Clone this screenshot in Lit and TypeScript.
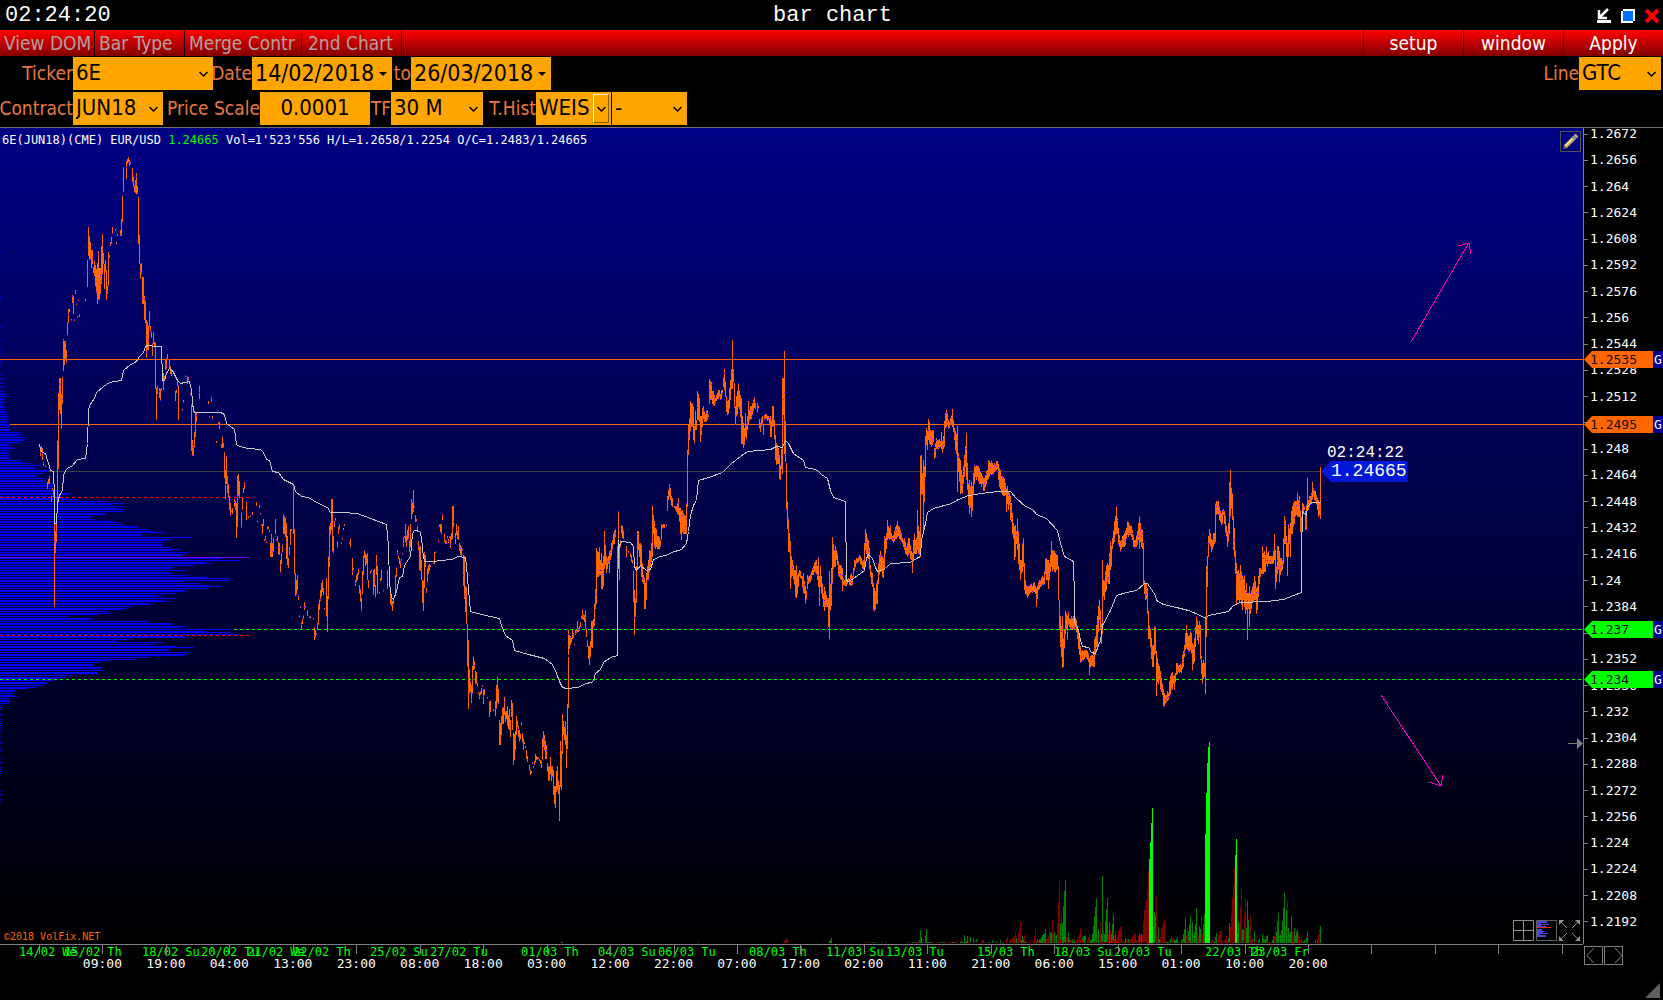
import { LitElement, html, svg, css } from "lit";
import { customElement, property } from "lit/decorators.js";

const PLOT_W = 1583;
const PLOT_H = 816;
const TOP = 128;

interface Tile {
  ox: number;
  oy: number;
  bars: string;
}

/* Bars are stored per tile as x:high-low, three units to one chart unit. */
const TILES: Tile[] = [
  {
    ox: 0,
    oy: 130,
    bars: `121:952-976 124:948-960 127:955-990 130:998-1006 136:1008 142:1056-1077 145:1048-1062 148:1038-1060 154:1100-1115 157:1074-1080 160:1080-1100
163:1100-1430 166:1205-1268 169:1180-1235 172:935-1130 175:790-1015 178:746-838 181:746-850 184:792-895 187:743-820 190:627-722 193:633-705 196:634-690 199:660-698
202:576-614 205:537-578 208:538-545 214:570 217:495-518 220:500-551 223:570 226:481-490 229:521 232:560 235:510 238:553-560 256:510
262:392-470 265:293-378 268:318-388 271:338-385 274:362-412 277:362-400 280:413-428 283:392-437 286:407-468 289:417-487 292:400-521 295:365-506 298:414-508 301:416-491 304:350-460 307:312-432 310:370-402 313:402-476 316:392-424 319:420-510 322:470-492 325:366-466 328:375-384
331:338-347 334:322-340 337:293-310 346:297-303 349:338 352:315 361:300-317 364:268-317 367:195-275 370:112-185 379:93-147 382:88-100 385:82-95 388:92-108 391:97-102 397:114-155 400:138-170 403:168-185 406:150-188 409:129-190 412:168-190
415:201-342 418:315-400 421:402-445 424:400-430 427:443-522 430:443-520 433:498-568 436:515-578 439:570-684 442:578-660 445:588-660 448:543-590 451:590-605 454:603-622 457:640-678 460:608-640 463:636-650 466:640-776 469:776-868 472:768-790 478:775-802 481:778-812 484:776-782 487:752 490:730-778 493:738-752 496:687-718 499:685-716 502:672-690 508:688-716 511:708-730 514:720-736
526:784-812 529:782-788 532:748-768 535:765-868 547:840 550:810-818 556:737 562:738-760 565:743-748 571:792 574:822-962 577:930-978 580:950-976 583:908-952 586:846-920 589:848-875 598:768-806 625:815-822 634:801-815 628:860 637:860 649:936 655:880 658:876-897 664:943-953 667:922-953 670:940-953
673:968-1044 676:1020-1106 679:978-1062 682:1038-1088 685:1062-1104 688:1100-1140 691:1120-1158 694:1140-1145 697:1135-1152 703:1108-1130 706:1115-1140 709:1120-1223 712:1040-1190 715:1032-1098 718:1055-1106 724:1150-1190 727:1103-1140 730:1075-1088 733:1058-1076 739:1113-1168 745:1160 751:1158 757:1147-1153 769:1116-1128 772:1175 778:1126-1134 781:1152 784:1186 787:1182-1212 790:1168-1188 793:1230 796:1220-1230 799:1236 802:1190-1200 805:1195 808:1202
811:1240-1280 814:1214-1280 817:1240-1280 820:1225-1266 826:1168-1210 829:1230 832:1220-1236 835:1238-1270 838:1240-1275 841:1290-1328 844:1270-1300 847:1245-1268 850:1152-1212 853:1160-1210 856:1165-1220 859:1180-1285 862:1220-1305 865:1285-1314 868:1253-1275 871:1198-1245 874:1200 880:1070-1212 883:1198-1330 886:1330-1397 889:1350-1395 892:1335-1380 895:1395-1408 898:1457 901:1430 904:1476-1498 907:1467-1480 910:1455-1465 913:1418-1440 916:1430 922:1442-1458 928:1460 931:1461 940:1467
943:1492-1530 946:1502-1520 949:1512 952:1480-1498 955:1422-1484 958:1408-1440 961:1380-1412 964:1360-1400 967:1352-1385 970:1374-1395 973:1438 979:1345-1460 982:1398-1505 985:1280-1405 988:1190-1310 991:1180-1215 994:1107-1200 997:1107-1265 1000:1220-1268 1003:1175-1190 1006:1166 1012:1235-1250 1015:1192-1210 1018:1182-1195 1024:1240 1027:1228 1030:1196 1033:1186 1048:1238 1051:1228-1250 1057:1285-1335 1060:1318 1066:1350-1367 1069:1335-1355 1072:1330-1350 1075:1315-1335 1078:1366-1390 1081:1378-1415 1084:1405-1442 1087:1325-1390 1090:1275-1335 1093:1260-1282 1096:1270-1308 1099:1275-1300 1102:1270-1350 1105:1350-1372
1111:1326 1114:1322 1120:1320-1395 1123:1318-1370 1126:1365-1403 1129:1275-1335 1132:1310-1390 1138:1390 1141:1345-1352 1144:1318-1350 1150:1383 1162:1322-1375 1171:1382-1420 1174:1400-1428 1177:1415-1442 1180:1405-1420 1186:1335-1388 1189:1312-1340 1192:1260-1272 1195:1276-1285 1198:1285-1300 1201:1295-1312 1204:1290 1207:1272 1210:1222-1250 1213:1220 1216:1182-1235 1219:1215-1250 1222:1200-1230 1225:1190-1225 1228:1230-1265 1231:1182-1250 1234:1107-1165 1237:1116-1150 1240:1080-1145 1243:1130 1246:1155-1175 1249:1170 1252:1190-1205 1255:1235-1260 1258:1250-1320`,
  },
  {
    ox: 400,
    oy: 400,
    bars: `61:440-512 64:482-540 67:540-608 70:540-633 73:458-562 76:465-500 79:565-578 82:505-545 85:495-520 88:492-512 91:497 100:488 103:458-490 106:455 115:422 118:372-380 121:373-395 124:372-400 127:342-360 133:400-425 136:420-430 139:425 142:412 145:418-428 148:410 151:408-442 154:400-418 157:320-415 160:318-380 166:400-430 169:372-405 172:395-415 175:380-418 178:430-452 181:435-465 184:440-470 187:450
190:465-558 193:470-595 196:560-635 199:563-672 202:672-800 205:720-927 208:808-880 211:845-875 214:855-908 217:800-880 220:770-808 223:785-805 226:815-850 229:818-850 232:850-860 235:880 238:880-895 241:875-885 244:865-880 247:858 250:868-910 253:868-885 262:893 268:905-950 271:900-935 280:930 286:905-948 289:856-925 292:830-905 295:868-910 298:962-1033 301:970-1035 304:950-1005 307:925-970 310:922-972 313:892-945 316:933-965 319:935-955 322:918-978 325:945-985 328:928-990 331:960-1010 334:902-950 337:910-990 340:1000-1095 343:1003-1080 346:995-1050 349:950-1005 352:962-980 355:980-1010 358:990-1025 361:1002-1015 364:966-975 367:1000-1025 370:1015-1050 373:1030 376:1040 379:1050-1075 382:1070-1085 388:1095-1110 391:1112-1125 394:1115 397:1088 400:1100 403:1085-1095 406:1062-1085 409:1068-1080 412:1072-1078 415:1075 418:1080 421:1080-1090 424:1085-1103 427:1015-1080 430:993-1040 433:1005-1050 436:1025-1075 439:1035-1075 442:1090-1115 445:1100-1142 448:1100-1140 451:1073-1125 454:1100-1142 457:1100-1130 460:1110-1185 463:1158-1212 466:1160-1223 469:1115-1175 472:1100-1170 475:1140-1180 478:1155-1262 481:1025-1160 484:1055-1170 487:942-1060 490:963-1005 493:980-1020 496:963-1035 499:1005-1102 502:912-1045 505:773-922 505:690-765 508:705-745 511:710-735 514:715-725 517:690-715 520:700-712 523:735 526:690-705 529:690-697 532:665-695 535:685-695 538:680-692 541:668-680 544:650-655 547:627-655 550:645-660 553:645-665 556:632-685 559:685-710 562:720-740 565:740-775 568:738-795 571:725-770 574:665-740 577:665-742 580:658-682 583:613-678 586:568-625 589:445-610 592:455-530 595:458-530 598:442-528 601:480-525 604:460-565 607:490-567 610:470-560 613:395-505 616:435-495 619:470-518 622:475-505 625:470-490 628:455-518 631:450-480 634:430-470 637:420-450 640:400-435 643:395-430 646:388-410 652:440-510 655:333-440 658:440-540 661:420-440 664:375-400 667:380-412 670:390-415 679:440-472 685:455 691:460-470 694:465-485 697:480-488
700:512-605 703:570-705 706:595-650 709:500-608 712:395-510 715:395-450 718:430-470 721:430-500 724:435-530 727:490-545 730:525-550 733:535-627 736:548-627 739:520-600 742:500-540 745:480-540 748:450-515 751:455-500 754:430-485 757:318-470 760:345-400 763:365-440 766:385-445 769:388-440 772:410-450 775:410-445 778:412-448 781:420-440 784:372-420 787:375-385 790:374-382 793:374-382 799:374 802:290-332 805:270-300 808:252-290 811:265-300 814:290-318 817:295-320 823:320 826:318-330 829:318-335 832:310-340 835:295-345 838:325-365 841:325-400 844:335-420 847:330-395 850:340-400 853:345-400 856:350-402 859:310-400 862:150-320 865:75-165`,
  },
  {
    ox: 640,
    oy: 320,
    bars: `148:295-360 151:243-335 154:250-320 157:250-320 160:260-360 163:320-368 166:270-330 169:300-330 172:213-300 175:222-300 178:235-305 181:290-365 184:290-345 187:265-320 190:258-295 193:275-305 196:282-305 199:275-305 202:272-300 205:285-290 208:178-250 211:185-240 214:187-240 217:215-250 220:215-258 223:225-258 226:235-248 229:225-242 232:218-235 235:210-235 238:210-230 241:222-240 244:212-235 247:210-222 250:172-200 253:147-210 256:183-230 259:230-275 262:245-285 265:240-282 268:205-265 271:180-240 274:147-205 277:60-205 280:147-185 283:190-262 286:260-313 289:228-290 292:213-285 295:190-260 298:210-265 301:225-290 304:235-370 307:290-372 310:310-383 313:325-375 316:280-350 319:315-355 322:290-330 325:245-312 328:270-302 331:260-295 334:258-295 337:250-285 340:240-272 343:233-262 346:250-265 352:250-275 355:258-265 358:298-325 361:310-335 364:295-320 367:290-310 370:315-345 373:285-300 376:283-295 379:282-297 382:288-302 385:290-300 388:295-310 391:290-350 394:300-350 397:260-320 400:258-320 403:300-355 406:345-420 409:370-435 412:375-430 415:385-430 418:405-475 421:435-478 424:388-445 427:175-460 430:175-285 433:93-400 436:303-425 439:430-568 442:545-625 445:595-695 448:640-698 451:665-805 454:710-770 457:720-768 460:735-780 463:750-795 466:750-830 469:735-833 472:765-825 475:760-800 478:750-770 481:755-772 484:768-775 487:768-800 490:760-818 493:785-820 496:800-850 499:815-838 502:765-805 505:770-790 508:768-785 511:762-785 514:755-778 517:745-765 520:738-765 523:730-755 526:723-758 529:722-760 532:738-780 535:713-800 538:770-858 541:740-800 544:770-820 547:790-835 550:820-860 553:803-872 556:815-860 559:825-860 562:835-860 565:835-920 568:753-957 571:790-870 574:745-858 577:653-790 580:672-745 583:690-740 586:675-740 589:690-720 592:700-735 595:725-768 598:735-770 601:735-775 604:738-780 607:745-812 610:775-795 613:780-797 616:765-797 619:780-797 622:778-790 625:775-785 628:778-795 631:765-798 634:760-797 637:768-795 640:745-770 643:722-752 646:720-740 649:715-730 652:715-728 655:712-725 658:705-722 661:710-730 664:715-735 667:725-745 670:720-748 673:670-745 676:627-690 679:640-700 682:655-710 685:660-715 688:685-745 691:735-770 694:755-790 697:760-800 700:790-872 703:805-872 706:815-870 709:790-850 712:780-852 715:730-790 718:705-765 721:695-755 724:705-745 727:710-770 730:715-772 733:650-750 736:655-700 739:640-685 742:600-660 745:618-655 748:625-658 751:615-655 754:640-660 757:648-662 760:645-668 763:635-665 766:622-655 769:615-655 772:605-650 775:618-650 778:622-655 781:630-660 784:640-665 787:655-670 790:660-680 793:655-690 796:668-700 799:680-705 802:670-710 805:655-705 808:655-700 811:675-715 814:695-720 817:700-758 820:660-718 823:640-700 826:660-700 829:655-700 832:572-690 835:620-700 838:635-705 841:405-710 844:405-525 847:460-520 850:420-640 853:440-545 856:350-470 859:325-375 862:330-390 865:297-360 868:305-370 871:330-375 874:335-380 877:330-375 880:330-365 883:385-415 886:370-410 889:355-385 892:360-385 895:362-385 898:358-382 901:365-380 904:338-385 907:365-398 910:350-385 913:305-380 916:280-325 919:270-320 922:280-315 925:300-325 928:305-322 931:295-315 934:285-315 937:267-320 940:300-335 943:325-360 946:335-390 949:340-400 952:320-515 955:400-455 958:415-485 961:420-520 964:450-518 967:465-520 970:440-490 973:405-470 976:380-440 979:340-480 982:430-510 985:490-555 988:480-582 991:500-562 994:483-590 997:500-572 1000:460-525 1003:435-490 1006:440-470 1009:435-480 1012:440-470 1015:440-485 1018:445-490 1021:455-490 1024:460-500 1027:470-490 1030:475-512 1033:475-512 1036:465-500 1039:455-490 1042:450-480 1045:420-475 1048:425-470 1051:430-460 1054:420-465 1057:430-460 1060:435-460 1063:430-455 1066:432-452 1069:425-450 1072:423-445 1075:432-480 1078:445-500`,
  },
  {
    ox: 1000,
    oy: 400,
    bars: `0:210-265 3:230-278 6:230-285 9:233-288 12:235-288 15:250-285 18:265-335 21:258-310 24:275-330 27:280-315 30:290-360 33:310-365 36:340-402 39:370-415 42:380-480 45:375-470 48:395-430 51:355-450 54:395-490 57:430-510 60:480-540 63:480-520 66:430-515 69:415-500 72:490-570 75:540-580 78:555-585 81:560-592 84:560-588 87:555-580 90:552-578 93:550-575 96:560-578 99:550-575 102:548-575 105:560-580 108:565-620 111:555-595 114:548-570 117:540-565 120:540-560 123:535-560 126:530-555 129:532-555 132:515-550 135:475-520 138:475-540 141:480-540 144:480-565 147:490-540 150:465-515 153:425-500 156:450-515 159:450-505 162:455-515 165:460-515 168:462-510 171:465-510 174:500-600 177:600-690 180:650-740 183:680-770 186:650-803 189:715-800 192:690-745 195:633-700 198:640-690 201:650-720 204:635-675 207:655-680 210:658-685 213:650-690 216:655-690 219:650-690 222:645-685 225:655-680 228:660-695 231:680-715 234:700-745 237:710-765 240:740-787 243:755-785 246:750-782 249:755-780 252:750-775 255:750-770 258:750-775 261:755-780 264:760-785 267:775-825 270:770-803 273:765-800 276:765-798 279:755-800 282:718-800 285:708-765 288:675-740 291:650-740 294:620-695 297:600-660 300:630-690 303:670-732 306:480-700 309:540-590 312:540-600 315:515-575 318:495-570 321:490-545 324:495-550 327:460-550 330:425-510 333:440-500 336:415-445 339:390-430 342:365-425 345:350-405 348:318-400 351:355-400 354:385-435 357:405-440 360:425-455 363:420-445 366:410-440 369:405-440 372:400-440 375:390-435 378:385-415 381:365-405 384:368-410 387:375-405 390:380-405 393:380-410 396:390-420 399:405-440 402:420-443 405:420-440 408:405-440 411:395-435 414:370-420 417:348-445 420:370-425 423:388-440 426:390-445 429:430-550 432:540-580 435:550-600 438:550-595 441:565-640 444:635-715 447:675-715 450:685-740 453:715-775 456:735-800 459:735-800 462:680-765 465:683-760 468:755-888 471:775-845 474:790-850 477:800-840 480:815-870 483:835-875 486:850-885 489:868-917 492:880-917 495:885-910 498:885-905 501:875-903 504:880-900 507:845-890 510:830-880 513:820-870 516:818-870 519:828-850 522:825-870 525:820-845 528:790-825 531:790-820 534:795-815 537:795-818 540:790-815 543:795-818 546:765-805 549:755-800 552:735-770 555:700-750 558:675-745 561:700-750 564:710-755 567:705-755 570:695-750 573:700-760 576:730-810 579:735-790 582:715-785 585:680-740 588:650-700 591:660-720 594:675-730 597:663-710 600:675-775 603:770-820 606:790-850 609:780-835 612:790-830 615:650-880 618:500-710 621:470-560 624:410-470 627:388-430 630:400-440 633:415-455 636:420-450 639:400-440 642:400-430 645:310-425 648:303-345 651:305-340 654:305-345 657:320-360 660:330-365 663:340-375 666:330-370 669:328-345 672:335-370 675:350-395 678:380-410 681:395-440 684:370-425 687:248-400 690:210-350 693:265-325 696:280-360 699:350-450 702:385-470 705:450-520 708:490-610 711:515-600 714:510-600 717:520-605 720:495-600 723:515-615 726:525-630 729:535-600 732:525-620 735:570-640 738:550-630 741:580-718 744:580-625 747:560-680 750:580-640 753:570-625 756:560-605 759:550-605 762:528-600 765:545-600 768:565-640 771:560-630 774:530-590 777:505-550 780:505-530 783:510-520 786:440-520 789:460-520 792:455-515 795:465-515 798:440-490 801:460-500 804:455-490 807:470-490 810:470-490 813:470-490 816:470-490 819:455-490 822:402-480 825:450-565 828:500-545 831:440-520 834:440-510 837:455-545 840:475-525 843:475-515 846:480-510 849:415-490 852:348-430 855:360-430 858:410-470 861:430-528 864:372-470 867:385-430 870:370-470 873:335-400 876:320-400 879:310-380 882:305-370 885:305-350 888:305-345 891:280-350 894:300-350 897:290-350 900:330-395 903:350-395 906:310-380 909:312-340 912:318-330 915:335-390 918:315-390 921:233-330 924:300-330 927:290-320 930:290-315 933:280-310 936:248-300 939:265-290 942:270-300 945:275-305 948:285-315 951:295-330 954:300-350 957:310-345 960:203-357`,
  },
];

const AVERAGE: { ox: number; oy: number; pts: string }[] = [
  {
    ox: 0,
    oy: 130,
    pts: `118,943 121,958 127,968 135,970 150,1022 160,1025 163,1100 163,1180 169,1180 172,1120 178,1095 187,1082 190,1035 195,1020 205,1013 215,1010 232,988 256,985 262,940 265,840 268,825 283,805 290,787 310,768 328,757 346,753 364,750 370,722 388,705 409,695 418,680 430,668 436,650 442,646 466,648 484,650 487,750 493,750 500,730 508,716 516,722 532,750 541,760 553,758 568,755 574,780 580,845 586,848 660,848 673,853 679,880 703,897 709,942 718,950 745,955 781,958 790,968 799,988 808,992 817,1023 835,1026 850,1047 880,1062 886,1085 905,1100 925,1103 955,1120 982,1132 990,1147 1025,1148 1072,1151 1110,1165 1160,1183 1165,1250 1168,1360 1171,1382 1174,1403 1180,1408 1189,1385 1198,1343 1207,1340 1213,1305 1230,1278 1236,1210 1243,1200 1252,1202`,
  },
  {
    ox: 400,
    oy: 400,
    pts: `60,398 66,440 70,475 75,484 100,484 120,480 155,478 175,469 195,472 200,500 207,600 212,635 245,642 270,650 297,656 303,675 316,707 337,722 343,750 385,762 433,776 458,793 468,820 478,845 486,862 500,865 535,861 550,852 580,843 586,820 600,807 610,787 630,772 652,765 652,600 655,420 658,440 665,423 690,426 700,440 703,500 708,512 722,497 740,512 750,508 760,477 780,468 800,465 815,457 845,447 858,430 865,395 872,345 880,315 889,300 895,242 925,232 968,218 995,190 1020,170 1043,155 1110,148 1130,140 1146,142 1155,120 1165,130 1180,160 1210,180 1217,202 1245,207`,
  },
  {
    ox: 640,
    oy: 320,
    pts: `535,455 545,462 562,475 570,510 580,533 616,545 619,780 625,785 640,775 672,750 678,715 685,702 697,715 705,742 712,755 735,745 750,731 810,727 830,715 841,708 845,660 855,610 862,577 880,565 935,550 955,537 985,525 1045,518`,
  },
  {
    ox: 1000,
    oy: 400,
    pts: `0,273 30,274 50,295 75,320 98,328 110,343 140,355 172,390 182,430 192,468 220,485 223,600 224,665 235,690 240,720 248,738 265,742 275,758 286,760 300,720 308,675 330,630 350,585 380,577 410,570 432,549 443,551 465,585 468,600 490,612 530,622 565,630 600,645 617,655 625,645 685,633 700,615 720,607 800,605 850,598 880,585 904,576 905,460 908,335 918,345 922,318 935,308 960,308`,
  },
];

/* Volume-at-price profile: offset:width, three units to one chart unit, from y = 400. */
const PROFILE = `-25:8 -10:20 -5:10 10:12 30:15 50:25 65:20 75:30 88:30 97:63 103:60 112:80 122:70 128:58 134:28 140:34 146:38 155:22 165:26 176:26 185:68 193:90 197:125 203:105 209:155 216:150 222:125 230:112 240:135 250:160 262:165 272:185 280:210 288:190 296:212 300:235 304:330 310:378 316:340 320:378 325:355 331:387 340:320 348:290 354:270 358:290 364:355 374:378 380:425 385:458 394:470 400:500 404:430 412:567 418:510 426:495 433:485 442:508 448:532 457:588 463:555 470:620 478:690 482:738 488:625 495:590 502:522 508:515 514:550 520:520 526:588 532:645 538:695 545:560 550:590 556:640 562:650 566:640 572:548 578:545 583:450 586:485 595:537 602:500 607:445 611:458 617:390 626:380 632:325 640:330 646:300 650:200 656:275 661:305 665:447 673:513 680:555 686:695 689:695 694:612 700:680 704:717 710:555 716:510 720:405 724:365 730:490 735:465 740:520 743:573 749:515 755:578 764:557 770:495 773:465 778:408 784:335 788:305 793:280 800:243 803:305 808:330 812:325 818:290 824:210 832:200 838:165 847:140 855:135 862:110 868:85 871:45 880:38 886:45 892:53 898:30 908:30 911:15`;

/* Wave volume, baseline 668: r falling, g rising, b highlighted. */
const VOLUME = `g-182:660 g-180:630 g-177:650 r-170:655 g-163:645 g-160:625 r-140:664 r-50:665 g-48:660 g-42:662 r-32:650 g-30:655
r82:651 r79:657 r91:655 r97:652 r100:657 r103:655 r106:633 g109:653 r112:657 r115:636 r118:622 r121:605 g124:660 g127:648 g130:660 r133:643 g136:662 r160:662 r163:648 r166:630 g169:662 g172:657 g178:657 g181:655 g184:650 g187:645 g190:642 g193:637 g196:627 r199:655 r202:652 r205:648 r208:621 g211:639 g214:636 r217:600 r220:640 g223:636 r226:648 g229:645 r232:609 r235:546 r238:483 g241:609 r244:582 g247:609 g250:558 g253:513 g256:480 r259:651 r262:651 g265:636 g268:657 r271:658 r274:660 g277:655 r286:664 r289:660 r292:657 r295:650 r298:640 r301:627 g304:664 g307:654 g310:648 g313:648 g316:645 r322:657 r325:650 r328:642 g331:660 g334:655 g337:640 g340:618 g343:588 g346:561 g349:534 r352:645 g355:627 r358:636 r361:605 g364:640 g367:468 r370:630 g373:640 g376:603 g379:567 g382:534 r385:642 g388:606 r391:627 g394:642 g397:612 g400:582 r403:645 g406:640 r409:655 r412:640 r415:633 r418:627 r421:621 r424:621 g427:665 g433:662 g436:654 g439:663 g442:657 g445:655 r451:657 r454:655 r457:650 r460:645 r463:642 r466:639 g469:663 r472:655 r475:648 g478:642 r481:645 g484:642 r487:645 r490:603 r493:570 r496:558 r499:540 r502:507 r505:453 b508:417 b511:366 b514:309 b517:264 g520:621 g523:576 g526:585 r529:528 r532:645 g535:621 g538:657 r541:650 r544:630 r547:618 r550:609 r553:597 g556:665 g571:657 r574:648 r577:655 r580:663 g583:660 g586:660 g589:655 g592:651 g604:660 g607:657 g610:642 g613:627 g616:594 r619:645 r622:624 g625:633 g628:612 g631:588 r634:642 g637:606 r640:640 g643:636 g646:612 g649:564 r652:636 r655:645 g658:618 g661:627 r664:588 r667:642 g670:612 g673:582 b676:342 b679:219 b682:129 b685:81 b688:66 r691:665 r694:660 g703:663 g706:651 g709:639 r712:655 r715:645 r718:636 r721:632 r724:630 r727:665 r730:663 r733:660 r736:655 r739:648 g742:663 g745:654 g748:609 r751:621 r754:579 r757:531 r760:492 r763:444 b766:405 b769:357 g772:639 g775:606 r778:606 r781:561 r784:504 g787:627 g790:630 r793:579 r796:537 g799:624 g802:543 g805:600 r808:618 r811:585 g814:660 r817:655 g820:657 g823:633 r829:660 g838:657 g847:640 g850:655 g853:660 g856:657 g859:648 g862:645 g868:665 g880:648 r883:648 r886:618 g889:636 g892:603 g895:579 r898:648 g901:645 g904:630 g907:603 g910:564 g913:519 r916:618 g919:570 r922:540 g925:624 g928:645 g931:636 g934:588 r937:633 r940:648 g943:624 g946:648 g949:636 g952:627 r955:642 r958:651 r961:660 r964:651 g967:663 g970:665 g979:654 g982:633 r1000:665 r1009:664 r1012:657 r1015:642 r1018:627 g1021:618`;

const noise = (n: number): number => {
  const v = Math.sin(n * 12.9898) * 43758.5453;
  return v - Math.floor(v);
};

function buildBars(): { bars: string; dots: string } {
  let bars = "";
  let dots = "";
  for (const t of TILES) {
    for (const item of t.bars.split(/\s+/)) {
      const [xs, ys] = item.split(":");
      const [a, b] = ys.split("-").map(Number);
      const x = t.ox + Math.floor(Number(xs) / 3);
      const y1 = t.oy - TOP + Math.floor((b === undefined ? a - 2 : a) / 3);
      const y2 = t.oy - TOP + Math.max(Math.ceil((b ?? a + 2) / 3), Math.floor(a / 3) + 1);
      bars += `M${x} ${y1}h1V${y2}h-1z`;
      const r = noise(x + y1);
      if (r < 0.7) {
        const at = r < 0.2 ? y1 : r < 0.32 ? y2 - 1 : Math.round(y1 + (y2 - y1) * noise(x));
        dots += `M${x} ${at}h1v1h-1z`;
      }
    }
  }
  return { bars, dots };
}

function buildAverage(): string {
  const out: string[] = [];
  for (const t of AVERAGE) {
    for (const p of t.pts.split(/\s+/)) {
      const [x, y] = p.split(",").map(Number);
      out.push(`${t.ox + Math.floor(x / 3) + 0.5},${t.oy - TOP + Math.floor(y / 3) + 0.5}`);
    }
  }
  return out.join(" ");
}

function buildProfile(): string {
  const pts = PROFILE.split(/\s+/).map((s) => s.split(":").map(Number));
  let d = "";
  let i = 0;
  for (let k = 0; ; k++) {
    const y = Math.round(391 + k * 1.642);
    if (y > 704) break;
    const u = (y - 400) * 3 + 1;
    while (i < pts.length - 2 && Math.abs(pts[i + 1][0] - u) <= Math.abs(pts[i][0] - u)) i++;
    const w = Math.round((pts[i][1] * (0.96 + noise(k) * 0.06)) / 3);
    d += `M0 ${y - TOP}h${w}v1H0z`;
  }
  for (const y of [252, 296, 298, 326, 339, 347, 350, 353, 360, 362, 366, 375, 379, 383, 387]) d += `M0 ${y - TOP}h${y > 376 ? 3 : 1}v1H0z`;
  for (let y = 705; y < 802; y += 2) {
    if (noise(y) > 0.35 && (y < 774 || y > 790)) d += `M0 ${y - TOP}h${noise(y + 1) > 0.8 ? 2 : 1}v1H0z`;
  }
  return d;
}

function buildVolume(): Record<string, string> {
  const out: Record<string, string> = { r: "", g: "", b: "" };
  const add = (k: string, x: number, h: number) => {
    out[k] += `M${x} 815h1v${-h}h-1z`;
  };
  for (const item of VOLUME.split(/\s+/)) {
    const [xs, y] = item.slice(1).split(":").map(Number);
    add(item[0], 980 + Math.floor(xs / 3), Math.round((668 - y) / 3));
  }
  for (let x = 865; x < 1320; x++) {
    if (x > 889 && x < 905) continue;
    const n = noise(x);
    if (n > 0.45) add(noise(Math.floor(x / 4)) > 0.5 ? "g" : "r", x, x > 955 && n > 0.8 ? 3 : 1);
  }
  for (let i = 0; i < 6; i++) {
    add("g", 961 + i * 3, 3 + ((i * 5) % 6));
    add("r", 1009 + i, 2 + i);
  }
  add("r", 469, 2);
  add("g", 561, 1);
  add("g", 562, 1);
  add("g", 698, 1);
  [1, 2, 3, 4, 5].forEach((h, i) => add("r", 783 + i, h));
  [2, 3, 5].forEach((h, i) => add("g", 829 + i, h));
  return out;
}

const BARS = buildBars();
const AVERAGE_LINE = buildAverage();
const PROFILE_PATH = buildProfile();
const VOLUMES = buildVolume();

const LEVELS = [
  { label: "1.2535", y: 359, tone: "orange" },
  { label: "1.2495", y: 424, tone: "orange" },
  { label: "1.237", y: 629, tone: "green" },
  { label: "1.234", y: 679, tone: "green" },
];

const DATES: [string, number][] = [
  ["14/02 We", 19], ["15/02 Th", 64], ["18/02 Su", 142], ["20/02 Tu", 201], ["21/02 We", 247],
  ["22/02 Th", 293], ["25/02 Su", 370], ["27/02 Tu", 430], ["01/03 Th", 521], ["04/03 Su", 598],
  ["06/03 Tu", 658], ["08/03 Th", 749], ["11/03 Su", 826], ["13/03 Tu", 886], ["15/03 Th", 977],
  ["18/03 Su", 1054], ["20/03 Tu", 1114], ["22/03 Th", 1205], ["23/03 Fr", 1251],
];

const TIMES = [
  "", "09:00", "19:00", "04:00", "13:00", "23:00", "08:00", "18:00", "03:00", "12:00", "22:00", "07:00", "17:00",
  "02:00", "11:00", "21:00", "06:00", "15:00", "01:00", "10:00", "20:00", "", "", "", "",
];

const pctX = (x: number): string => `${((x / PLOT_W) * 100).toFixed(3)}%`;
const pctY = (y: number): string => `${(((y - TOP) / PLOT_H) * 100).toFixed(3)}%`;

@customElement("chart-header")
export class ChartHeader extends LitElement {
  static styles = css`
    :host { display: block; }
    .title {
      display: grid;
      grid-template-columns: 1fr auto 1fr;
      align-items: center;
      height: 30px;
      padding: 2px 3px 0 5px;
      box-sizing: border-box;
      font: 22px/28px "Liberation Mono", monospace;
    }
    .name { margin: 0; font: inherit; }
    .controls { display: flex; justify-content: flex-end; gap: 8px; }
    button { font: inherit; color: inherit; border: 0; padding: 0; background: none; cursor: pointer; }
    .controls button { width: 16px; height: 16px; display: flex; }
    .menu {
      display: flex;
      height: 26px;
      background: linear-gradient(#ff0000, #800000);
      font: 19px/26px "DejaVu Sans Condensed", "Noto Sans", sans-serif;
    }
    .menu button { flex: none; width: 95px; border-right: 1px solid #200000; color: #b0a0a0; padding: 0 4px; text-align: left; white-space: nowrap; box-sizing: border-box; }
    .menu .short { width: 90px; }
    .menu .long { width: 117px; }
    .menu .second { width: 100px; padding-left: 6px; }
    .menu .spacer { flex: 1; }
    .menu .wide { width: 100px; border: 0; border-left: 1px solid #200000; color: #fff; padding: 0; text-align: center; }
  `;

  render() {
    return html`
      <header class="title">
        <time>02:24:20</time>
        <h1 class="name">bar chart</h1>
        <div class="controls">
          <button aria-label="Minimize">
            <svg width="16" height="16" viewBox="0 0 16 16" fill="none" stroke="#fff"><path d="M12 1L4 9M3 2v8h8" stroke-width="2.500" /><path d="M1 13.500h14" stroke-width="3" /></svg>
          </button>
          <button aria-label="Restore">
            <svg width="16" height="16" viewBox="0 0 16 16"><path d="M3 1h12v12h-2v2H1V3h2z" fill="#fff" /><path d="M3 3h10v10H3z" fill="#0070ff" /></svg>
          </button>
          <button aria-label="Close">
            <svg width="16" height="16" viewBox="0 0 16 16"><path d="M2 2l12 12M14 2L2 14" stroke="#f00" stroke-width="4" /></svg>
          </button>
        </div>
      </header>
      <nav class="menu" aria-label="Chart">
        <button>View DOM</button><button class="short">Bar Type</button><button class="long">Merge Contr</button><button class="second">2nd Chart</button>
        <span class="spacer"></span>
        <button class="wide">setup</button><button class="wide">window</button><button class="wide">Apply</button>
      </nav>
    `;
  }
}

@customElement("chart-field")
export class ChartField extends LitElement {
  @property() label = "";
  @property() value = "";
  @property() kind = "select";

  static styles = css`
    :host { display: flex; justify-content: flex-end; font-family: "DejaVu Sans Condensed", "Noto Sans", sans-serif; }
    label { font-size: 19px; line-height: 33px; color: #e87840; white-space: nowrap; }
    .box { position: relative; flex: none; width: var(--box, 90px); height: 33px; background: #ffa500; }
    select, input {
      appearance: none;
      width: 100%;
      height: 33px;
      margin: 0;
      padding: 0 0 2px 3px;
      border: 0;
      border-radius: 0;
      background: transparent;
      font: inherit;
      font-size: 22px;
      color: #000;
      outline: none;
      box-sizing: border-box;
    }
    .date { font-size: 23px; }
    .number { text-align: center; padding-left: 0; }
    svg { position: absolute; right: 5px; top: 12px; pointer-events: none; }
    .raised { position: absolute; right: 2px; top: 2px; width: 14px; height: 27px; border: 1px solid; border-color: #fff4c0 #806000 #806000 #fff4c0; pointer-events: none; }
  `;

  render() {
    const control =
      this.kind === "select" || this.kind === "raised"
        ? this.label
          ? html`<select id="c"><option>${this.value}</option></select>`
          : html`<select aria-label="Second histogram"><option>${this.value}</option></select>`
        : html`<input id="c" class=${this.kind} type="text" .value=${this.value} />`;
    return html`
      ${this.label ? html`<label for="c">${this.label}</label>` : ""}
      <div class="box">
        ${control}
        ${this.kind === "number"
          ? ""
          : this.kind === "date"
            ? html`<svg width="8" height="10" viewBox="0 0 8 10"><path d="M0 3h8L4 7z" /></svg>`
            : html`<svg width="9" height="10" viewBox="0 0 9 10"><path d="M0.5 3l4 4 4-4" fill="none" stroke="#000" stroke-width="1.500" /></svg>`}
        ${this.kind === "raised" ? html`<span class="raised"></span>` : ""}
      </div>
    `;
  }
}

@customElement("price-plot")
export class PricePlot extends LitElement {
  static styles = css`
    :host { display: block; position: relative; min-height: 0; min-width: 0; background: linear-gradient(#000084, #000); font-family: "DejaVu Sans Mono", monospace; }
    .canvas { display: block; position: absolute; inset: 0; width: 100%; height: 100%; }
    .info { position: relative; margin: 0; padding: 5px 2px; font-size: 12px; line-height: 14px; }
    .last { color: #00ff00; }
    .edit { position: absolute; top: 3px; right: 2px; width: 21px; height: 21px; padding: 1px; border: 1px solid #505050; background: none; display: flex; }
    .quote { position: absolute; transform: translateY(-27px); font-family: "Liberation Mono", monospace; }
    .clock { display: block; padding-left: 6px; font-size: 16px; line-height: 16px; }
    .price { display: block; padding: 0 1px 0 10px; background: #0018d8; clip-path: polygon(0 50%, 10px 0, 100% 0, 100% 100%, 10px 100%); font-size: 18px; line-height: 21px; }
    .marker { position: absolute; right: 0; }
    .legal { position: absolute; left: 4px; bottom: 1px; color: #ff6600; font-size: 10px; line-height: 12px; }
    .tools { position: absolute; right: 3px; bottom: 2px; display: flex; gap: 2px; }
    .tools button { padding: 0; border: 0; background: none; display: flex; width: 21px; height: 22px; }
  `;

  render() {
    return html`
      <svg class="canvas" viewBox="0 0 ${PLOT_W} ${PLOT_H}" preserveAspectRatio="none" shape-rendering="crispEdges" role="img" aria-label="6E price bars">
        ${svg`
          <path d="M0 231.5H${PLOT_W}M0 296.5H${PLOT_W}" stroke="#ff6600" />
          <path d="M1 343.5H1321" stroke="#404040" />
          <path d="M0 501.5H${PLOT_W}M0 551.5H${PLOT_W}" stroke="#00ff00" stroke-dasharray="3 3" />
          <path d="${PROFILE_PATH}" fill="#0000ff" />
          <path d="M0 369.5H249M0 507.5H249" stroke="#ff0000" stroke-dasharray="3 3" />
          <path d="M0 429.5H250" stroke="#6a00ff" />
          <path d="${BARS.bars}" fill="#ff6600" />
          <path d="${BARS.dots}" fill="#8800ff" />
          <polyline points="${AVERAGE_LINE}" fill="none" stroke="#c8c8c8" />
          <path d="${VOLUMES.g}" fill="#008000" />
          <path d="${VOLUMES.r}" fill="#800000" />
          <path d="${VOLUMES.b}" fill="#00ff00" />
          <path d="M1411 214L1468 116M1458 118L1469 115L1471 126" fill="none" stroke="#ff0099" />
          <path d="M1381 567L1441 658M1429 654L1441 658L1443 647" fill="none" stroke="#ff00cc" />
        `}
      </svg>
      <p class="info">6E(JUN18)(CME) EUR/USD <span class="last">1.24665</span> Vol=1'523'556 H/L=1.2658/1.2254 O/C=1.2483/1.24665</p>
      <button class="edit" aria-label="Draw">
        <svg width="17" height="17" viewBox="0 0 17 17">
          <path d="M3 14L12 5" stroke="#c8a850" stroke-width="4" /><path d="M3 13L12 4" stroke="#fff0a0" stroke-width="1.500" />
          <path d="M11 6l2-2" stroke="#70a090" stroke-width="4" /><path d="M13 4l2-2" stroke="#e09090" stroke-width="4" /><path d="M1 16l1-4 3 3z" fill="#806850" />
        </svg>
      </button>
      <div class="quote" style="left:${pctX(1321)};top:${pctY(472)}">
        <span class="clock">02:24:22</span><span class="price">1.24665</span>
      </div>
      <svg class="marker" style="top:${pctY(738)}" width="15" height="11" viewBox="0 0 15 11"><path d="M0 5h9v1H0zM9 0l6 5.500L9 11z" fill="#808080" /></svg>
      <small class="legal">©2018 VolFix.NET</small>
      <div class="tools">
        <button aria-label="Grid">
          <svg width="21" height="22" viewBox="0 0 21 22" fill="none" stroke="#909090"><path d="M.5.5h20v20H.5zM10.5 0v21M0 10.5h21" /></svg>
        </button>
        <button aria-label="Profile">
          <svg width="21" height="22" viewBox="0 0 21 22"><path d="M.5.5h20v20H.5z" fill="none" stroke="#606060" /><path d="M1 1h10v2h-6v1h8v1H5v1h5v1H1zM1 9h5v2h3v1H7v1h5v1H4v1h6v2H1z" fill="#4848d0" /><path d="M1 7.500h14" stroke="#f02020" /></svg>
        </button>
        <button aria-label="Expand">
          <svg width="21" height="22" viewBox="0 0 21 22"><path d="M2 2l6 6M19 2l-6 6M2 19l6-6M19 19l-6-6" stroke="#909090" fill="none" /><path d="M0 0h5L0 5zM21 0h-5l5 5zM0 21h5l-5-5zM21 21h-5l5-5z" fill="#909090" /></svg>
        </button>
      </div>
    `;
  }
}

@customElement("price-axis")
export class PriceAxis extends LitElement {
  static styles = css`
    :host { display: block; position: relative; border-left: 1px solid #808080; font: 13px/12px "DejaVu Sans Mono", monospace; min-height: 0; }
    .scale { display: flex; flex-direction: column; justify-content: space-between; height: 100%; box-sizing: border-box; padding: 0 0 16px; margin: 0; list-style: none; }
    .scale li { display: flex; align-items: center; gap: 2px; }
    .scale li::before { content: ""; width: 4px; height: 1px; background: #808080; }
    .tag { position: absolute; left: 0; right: 0; display: flex; height: 17px; line-height: 17px; transform: translateY(-8px); }
    .value { flex: 1; padding-left: 6px; color: #101010; clip-path: polygon(0 50%, 8px 0, 100% 0, 100% 100%, 8px 100%); }
    .orange { background: #ff6600; }
    .green { background: #00ff00; }
    .flag { width: 10px; background: #000099; text-align: center; }
  `;

  render() {
    const prices = Array.from({ length: 31 }, (_, i) => String((12672 - i * 16) / 10000));
    return html`
      <ul class="scale">${prices.map((p) => html`<li>${p}</li>`)}</ul>
      ${LEVELS.map(
        (l) => html`<div class="tag" style="top:${pctY(l.y)}"><span class="value ${l.tone}">${l.label}</span><span class="flag">G</span></div>`
      )}
    `;
  }
}

@customElement("time-axis")
export class TimeAxis extends LitElement {
  static styles = css`
    :host { display: block; position: relative; height: 55px; border-top: 1px solid #808080; font: 13px/14px "DejaVu Sans Mono", monospace; }
    span { position: absolute; white-space: nowrap; }
    .tick { top: 0; width: 1px; height: 9px; background: #808080; }
    .date { top: 0; color: #00ff00; font-size: 12px; }
    .time { top: 12px; transform: translateX(-50%); }
  `;

  render() {
    return html`
      ${DATES.map(([t, x]) => html`<span class="date" style="left:${pctX(x)}">${t}</span>`)}
      ${TIMES.map((t, i) => {
        const left = pctX(39 + i * 63.45);
        return html`<span class="tick" style="left:${left}"></span>${t ? html`<span class="time" style="left:${left}">${t}</span>` : ""}`;
      })}
    `;
  }
}

@customElement("app-root")
export class AppRoot extends LitElement {
  static styles = css`
    :host { display: flex; flex-direction: column; height: 100vh; min-height: 600px; overflow: hidden; background: #000; color: #fff; }
    .row { display: flex; height: 33px; margin-bottom: 2px; }
    .first { margin-top: 1px; }
    .push { margin-left: auto; margin-right: 2px; }
    .ticker { width: 213px; --box: 140px; }
    .from { width: 179px; --box: 140px; }
    .until { width: 159px; --box: 140px; }
    .line { width: 121px; --box: 82px; }
    .contract { width: 163px; --box: 90px; }
    .scale { width: 207px; --box: 110px; }
    .frame { width: 113px; --box: 92px; }
    .hist { width: 128px; --box: 75px; }
    .extra { width: 75px; margin-left: 1px; --box: 75px; }
    .chart { flex: 1; min-height: 0; display: grid; grid-template: minmax(0, 1fr) auto / minmax(0, 1fr) 80px; border-top: 1px solid #707070; }
    .corner { display: flex; align-items: flex-start; justify-content: space-between; padding: 2px 3px 2px 1px; }
    .pager { display: flex; gap: 1px; }
    .pager button { width: 19px; height: 19px; padding: 0; border: 1px solid #808080; background: none; display: flex; }
    .grip { align-self: flex-end; }
  `;

  render() {
    return html`
      <chart-header></chart-header>
      <div class="row first">
        <chart-field class="ticker" label="Ticker" value="6E"></chart-field>
        <chart-field class="from" label="Date" value="14/02/2018" kind="date"></chart-field>
        <chart-field class="until" label="to" value="26/03/2018" kind="date"></chart-field>
        <chart-field class="line push" label="Line" value="GTC"></chart-field>
      </div>
      <div class="row">
        <chart-field class="contract" label="Contract" value="JUN18"></chart-field>
        <chart-field class="scale" label="Price Scale" value="0.0001" kind="number"></chart-field>
        <chart-field class="frame" label="TF" value="30 M"></chart-field>
        <chart-field class="hist" label="T.Hist" value="WEIS" kind="raised"></chart-field>
        <chart-field class="extra" value="-"></chart-field>
      </div>
      <main class="chart">
        <price-plot></price-plot>
        <price-axis></price-axis>
        <time-axis></time-axis>
        <div class="corner">
          <div class="pager">
            <button aria-label="Back"><svg width="17" height="17" viewBox="0 0 17 17"><path d="M9 1L2 8.500l7 7.500" fill="none" stroke="#808080" /></svg></button>
            <button aria-label="Forward"><svg width="17" height="17" viewBox="0 0 17 17"><path d="M10 1l7 7.500-7 7.500" fill="none" stroke="#808080" /></svg></button>
          </div>
          <svg class="grip" width="15" height="15" viewBox="0 0 15 15"><path d="M15 0v15H0z" fill="#606060" /></svg>
        </div>
      </main>
    `;
  }
}
